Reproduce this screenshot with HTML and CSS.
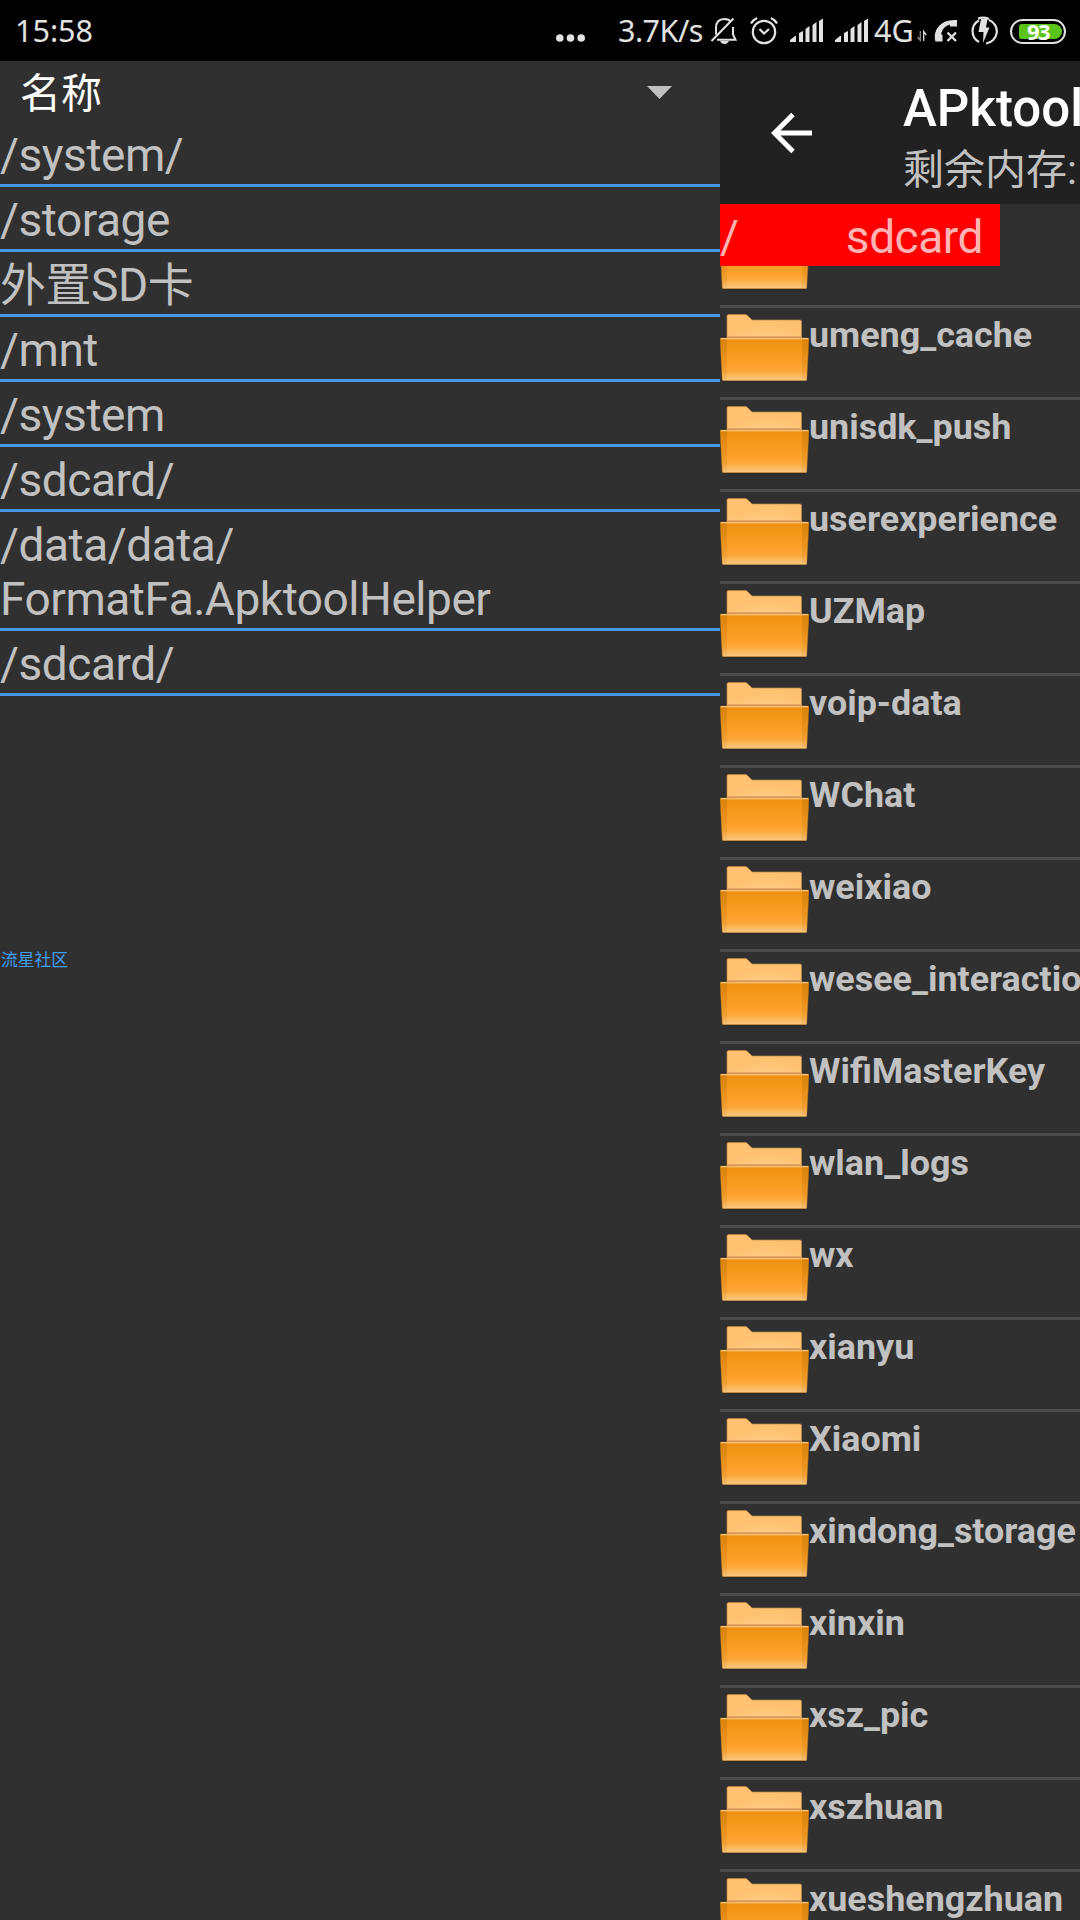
FILE: index.html
```html
<!DOCTYPE html>
<html lang="zh-CN">
<head>
<meta charset="utf-8">
<title>APktool</title>
<link rel="stylesheet" href="styles.css">
</head>
<body>
<svg class="defs" width="0" height="0" aria-hidden="true">
  <defs>
    <linearGradient id="front" x1="0" y1="0" x2="0" y2="1">
      <stop offset="0" stop-color="#ee900f"/>
      <stop offset=".65" stop-color="#fda22c"/>
      <stop offset=".78" stop-color="#fca93d"/>
      <stop offset="1" stop-color="#fdca85"/>
    </linearGradient>
    <radialGradient id="back" cx=".55" cy="1" r=".6">
      <stop offset="0" stop-color="#ffcd8c"/>
      <stop offset=".6" stop-color="#ffc67a"/>
      <stop offset="1" stop-color="#fec271"/>
    </radialGradient>
    <linearGradient id="shade" x1="0" y1="0" x2="0" y2="1">
      <stop offset="0" stop-color="#a86400" stop-opacity=".32"/>
      <stop offset=".7" stop-color="#a86400" stop-opacity=".16"/>
      <stop offset="1" stop-color="#a86400" stop-opacity=".1"/>
    </linearGradient>
    <symbol id="folder" viewBox="0 0 89 72">
      <path d="M3 66h83v2.500H3z" fill="#000" opacity=".18"/>
      <path d="M7 26V2Q7 .5 8.500 .5H25Q26.500 .5 27.500 1.500L32 6H80Q81.500 6 81.500 7.500V26z" fill="url(#back)" stroke="#b98745" stroke-width=".7"/>
      <path d="M7.500 22h74v2h-74z" fill="#e8a468"/>
      <path d="M.8 24H88.200Q89 24 88.900 25L86.800 65.500Q86.700 66.700 85.500 66.700H3.500Q2.300 66.700 2.200 65.500L.1 25Q0 24 .8 24z" fill="url(#front)" stroke="#a66b1a" stroke-width=".5"/>
      <path d="M.5 25H7V66H2.600zM82 25H88.500L86.400 66H82z" fill="url(#shade)"/>
      <path d="M.8 24.800H88.200" stroke="#ffd69c" stroke-width="1.100"/>
    </symbol>
    <symbol id="signal" viewBox="0 0 33 62">
      <path d="M0 42v-2l5-4h1v6zM9 33l4-2v11H9zM15.500 29l4-3v16h-4zM22.500 25l4-3v20h-4zM29 21l4-2.500V42h-4z" fill="#e2e2e2"/>
    </symbol>
  </defs>
</svg>

<header class="status">
  <span class="clock">15:58</span>
  <svg class="dots" viewBox="556 0 29 62"><g fill="#e2e2e2"><circle cx="559.800" cy="38" r="3.800"/><circle cx="570.500" cy="38" r="3.800"/><circle cx="581.200" cy="38" r="3.800"/></g></svg>
  <span class="speed">3.7K/s</span>
  <svg class="bell" viewBox="710 0 28 62"><g fill="none" stroke="#e2e2e2" stroke-width="2"><path d="M716 34.500V28Q716 19 724.500 19Q729 19 731 22M733 27V34.500L735.500 39.700H717M711.500 41L733.500 18.500"/></g><path d="M720 41h9q-1.500 3-4.500 3t-4.500-3z" fill="#e2e2e2"/></svg>
  <svg class="alarm" viewBox="750 0 28 62"><g fill="none" stroke="#e2e2e2" stroke-width="2.200"><circle cx="764" cy="32" r="11.200"/><path d="M759.500 29l4.500 4.500 5-4.500M751 23.500Q753 20 757 18M777 23.500Q775 20 771 18"/></g></svg>
  <svg class="signal"><use href="#signal"/></svg>
  <svg class="signal"><use href="#signal"/></svg>
  <span class="network">4G</span>
  <svg class="traffic" viewBox="917 0 10 62"><g fill="none" stroke-width="1.300"><path d="M920.300 31v9.500L917.500 37" stroke="#888"/><path d="M923.700 41V31.500L926.300 35" stroke="#ddd"/></g></svg>
  <svg class="phone" viewBox="934 0 24 62"><path d="M957 20L957 26.500L950 26.500V24.500Q943 26 941 34L942.500 35V41.500H935.500Q933 33 939 26Q945 19 957 20z" fill="#e2e2e2"/><path d="M947.500 32.500l8.500 8.500M956 32.500l-8.500 8.500" stroke="#e2e2e2" stroke-width="2.300"/></svg>
  <svg class="charge" viewBox="970 0 28 62"><path d="M979 20.500A12.200 12.200 0 0 0 979 42M989 20A12.200 12.200 0 0 1 986 43.500M978 18.800Q983 16.500 989 19" fill="none" stroke="#e2e2e2" stroke-width="2.200"/><path d="M981 19h6.500l-1.500 8.500h3.500L983 43l.5-11h-5z" fill="#e2e2e2"/></svg>
  <div class="battery"><span class="level">93</span></div>
</header>

<div class="screen">
  <nav class="drawer">
    <div class="spinner"><span>名称</span><svg class="caret" viewBox="0 0 25 13"><path d="M0 0h25L12.500 13z" fill="#c1c1c1"/></svg></div>
    <ul class="paths">
      <li>/system/</li>
      <li>/storage</li>
      <li>外置SD卡</li>
      <li>/mnt</li>
      <li>/system</li>
      <li>/sdcard/</li>
      <li>/data/data/<br>FormatFa.ApktoolHelper</li>
      <li>/sdcard/</li>
    </ul>
    <p class="community">流星社区</p>
  </nav>

  <main class="browser">
    <div class="toolbar">
      <svg class="back" viewBox="0 0 42 42"><path d="M41 21H4M22 2.500L3.500 21L22 39.500" fill="none" stroke="#fff" stroke-width="5"/></svg>
      <div class="titles"><h1>APktool</h1><p>剩余内存:</p></div>
    </div>
    <div class="crumbs"><span>/</span><span>sdcard</span></div>
    <div class="viewport">
      <ul class="files">
        <li><svg><use href="#folder"/></svg></li>
        <li><svg><use href="#folder"/></svg><b>umeng_cache</b></li>
        <li><svg><use href="#folder"/></svg><b>unisdk_push</b></li>
        <li><svg><use href="#folder"/></svg><b>userexperience</b></li>
        <li><svg><use href="#folder"/></svg><b>UZMap</b></li>
        <li><svg><use href="#folder"/></svg><b>voip-data</b></li>
        <li><svg><use href="#folder"/></svg><b>WChat</b></li>
        <li><svg><use href="#folder"/></svg><b>weixiao</b></li>
        <li><svg><use href="#folder"/></svg><b>wesee_interactio</b></li>
        <li><svg><use href="#folder"/></svg><b>WifiMasterKey</b></li>
        <li><svg><use href="#folder"/></svg><b>wlan_logs</b></li>
        <li><svg><use href="#folder"/></svg><b>wx</b></li>
        <li><svg><use href="#folder"/></svg><b>xianyu</b></li>
        <li><svg><use href="#folder"/></svg><b>Xiaomi</b></li>
        <li><svg><use href="#folder"/></svg><b>xindong_storage</b></li>
        <li><svg><use href="#folder"/></svg><b>xinxin</b></li>
        <li><svg><use href="#folder"/></svg><b>xsz_pic</b></li>
        <li><svg><use href="#folder"/></svg><b>xszhuan</b></li>
        <li><svg><use href="#folder"/></svg><b>xueshengzhuan</b></li>
      </ul>
    </div>
  </main>
</div>
</body>
</html>
```
FILE: styles.css
```css
* { box-sizing: border-box; margin: 0; padding: 0; }
body {
  width: 1080px;
  height: 1920px;
  overflow: hidden;
  display: flex;
  flex-direction: column;
  background: #303030;
  color: #c1c1c1;
  font-family: Roboto, "Noto Sans CJK SC", sans-serif;
}
ul { list-style: none; }
svg { display: block; flex: none; }

/* status bar */
.status {
  height: 61px;
  flex: none;
  display: flex;
  padding-left: 15px;
  background: #000;
  color: #e2e2e2;
  font: 30.5px/61px "Noto Sans", sans-serif;
  white-space: nowrap;
}
.status svg { height: 62px; }
.clock { width: 541px; }
.dots { width: 29px; }
.speed { width: 92px; margin-left: 33px; letter-spacing: -.5px; }
.bell { width: 28px; }
.alarm { width: 28px; margin-left: 12px; }
.signal { width: 33px; margin-left: 12px; }
.network { width: 43px; margin-left: 6px; }
.traffic { width: 10px; }
.phone { width: 24px; margin-left: 7px; }
.charge { width: 28px; margin-left: 12px; }
.battery {
  width: 56px;
  height: 25px;
  margin: 19px 0 0 12px;
  padding: 3px;
  border: 2px solid #e2e2e2;
  border-radius: 13px;
}
.level {
  display: block;
  width: 43px;
  height: 15px;
  margin-left: 4px;
  border-radius: 3px 8px 8px 3px;
  background: #5ac41a;
  color: #fff;
  font: bold 22px/15px "Noto Sans", sans-serif;
  padding-left: 8px;
  letter-spacing: -1.500px;
}

.screen { flex: 1; display: flex; min-height: 0; }

/* drawer */
.drawer { width: 720px; flex: none; }
.spinner {
  height: 61px;
  display: flex;
  justify-content: space-between;
  padding: 0 48px 0 20px;
  color: #fff;
  font-size: 41px;
  line-height: 66px;
}
.caret { width: 25px; height: 13px; margin-top: 25px; }
.paths li {
  padding: 6px 0 2px;
  border-bottom: 3px solid #4797e8;
  font-size: 46px;
  letter-spacing: -.460px;
  line-height: 54px;
}
.community {
  margin-top: 254px;
  padding-left: 1px;
  color: #429bf2;
  font-size: 16.800px;
  line-height: 20px;
}

/* file browser */
.browser { flex: 1; min-width: 0; display: flex; flex-direction: column; overflow: hidden; white-space: nowrap; }
.toolbar { height: 143px; flex: none; display: flex; background: #212121; }
.back { width: 42px; height: 42px; margin: 50.500px 0 0 51px; }
.titles { margin-left: 90px; padding-top: 18px; }
.titles h1 { color: #fff; font-size: 51px; font-weight: 500; line-height: 60px; }
.titles p { font-size: 41px; line-height: 63px; }
.crumbs {
  width: 280px;
  height: 62px;
  flex: none;
  display: flex;
  justify-content: space-between;
  padding: 6px 17px 0 0;
  background: #f00;
  color: #ffb3b3;
  font-size: 46px;
  letter-spacing: -.460px;
  line-height: 54px;
}
.viewport { flex: 1; min-height: 0; overflow: hidden; }
.files { margin-top: -50px; }
.files li { height: 92px; display: flex; border-bottom: 3px solid #4a4a4a; }
.files svg { width: 89px; height: 72px; margin-top: 5.500px; }
.files b { font-size: 35.900px; line-height: 42px; padding-top: 6px; }
```
